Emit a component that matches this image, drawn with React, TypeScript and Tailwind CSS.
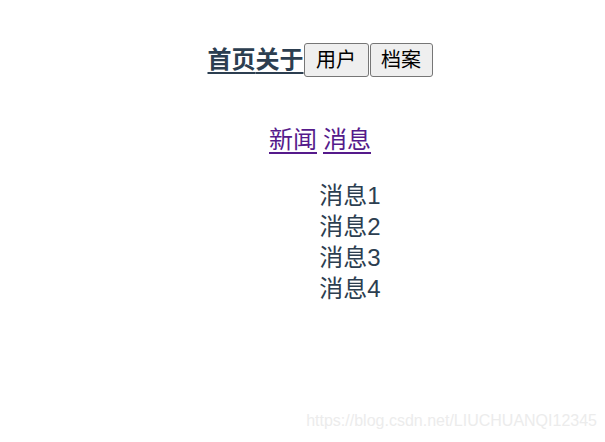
const font = { fontFamily: '"Liberation Sans", "Noto Sans CJK SC", sans-serif' };

export default function App() {
  return (
    <div className="relative h-[442px] w-[605px] overflow-hidden bg-white" style={font}>
      <div className="w-[640px] pt-[43px] text-center text-[24px] text-[#2c3e50]">
        <nav className="flex h-[34px] items-center justify-center">
          <a className="font-bold leading-[32px] underline decoration-2 underline-offset-4">首页</a>
          <a className="font-bold leading-[32px] underline decoration-2 underline-offset-4">关于</a>
          <button className="h-[34px] w-[65px] rounded-[3px] border border-[#767676] bg-[#efefef] text-[20px] text-black">
            用户
          </button>
          <button className="ml-[1px] h-[34px] w-[63px] rounded-[3px] border border-[#767676] bg-[#efefef] text-[20px] text-black">
            档案
          </button>
        </nav>

        <div className="mt-[47px] flex justify-center gap-[6px] leading-[32px]">
          <a className="text-[#551a8b] underline underline-offset-4">新闻</a>
          <a className="text-[#551a8b] underline underline-offset-4">消息</a>
        </div>

        <ul className="mt-[24px] pl-[60px] leading-[31px]">
          <li>消息1</li>
          <li>消息2</li>
          <li>消息3</li>
          <li>消息4</li>
        </ul>
      </div>

      <div className="absolute bottom-[9px] right-[8px] text-[16px] text-[#ececec]">
        https://blog.csdn.net/LIUCHUANQI12345
      </div>
    </div>
  );
}
